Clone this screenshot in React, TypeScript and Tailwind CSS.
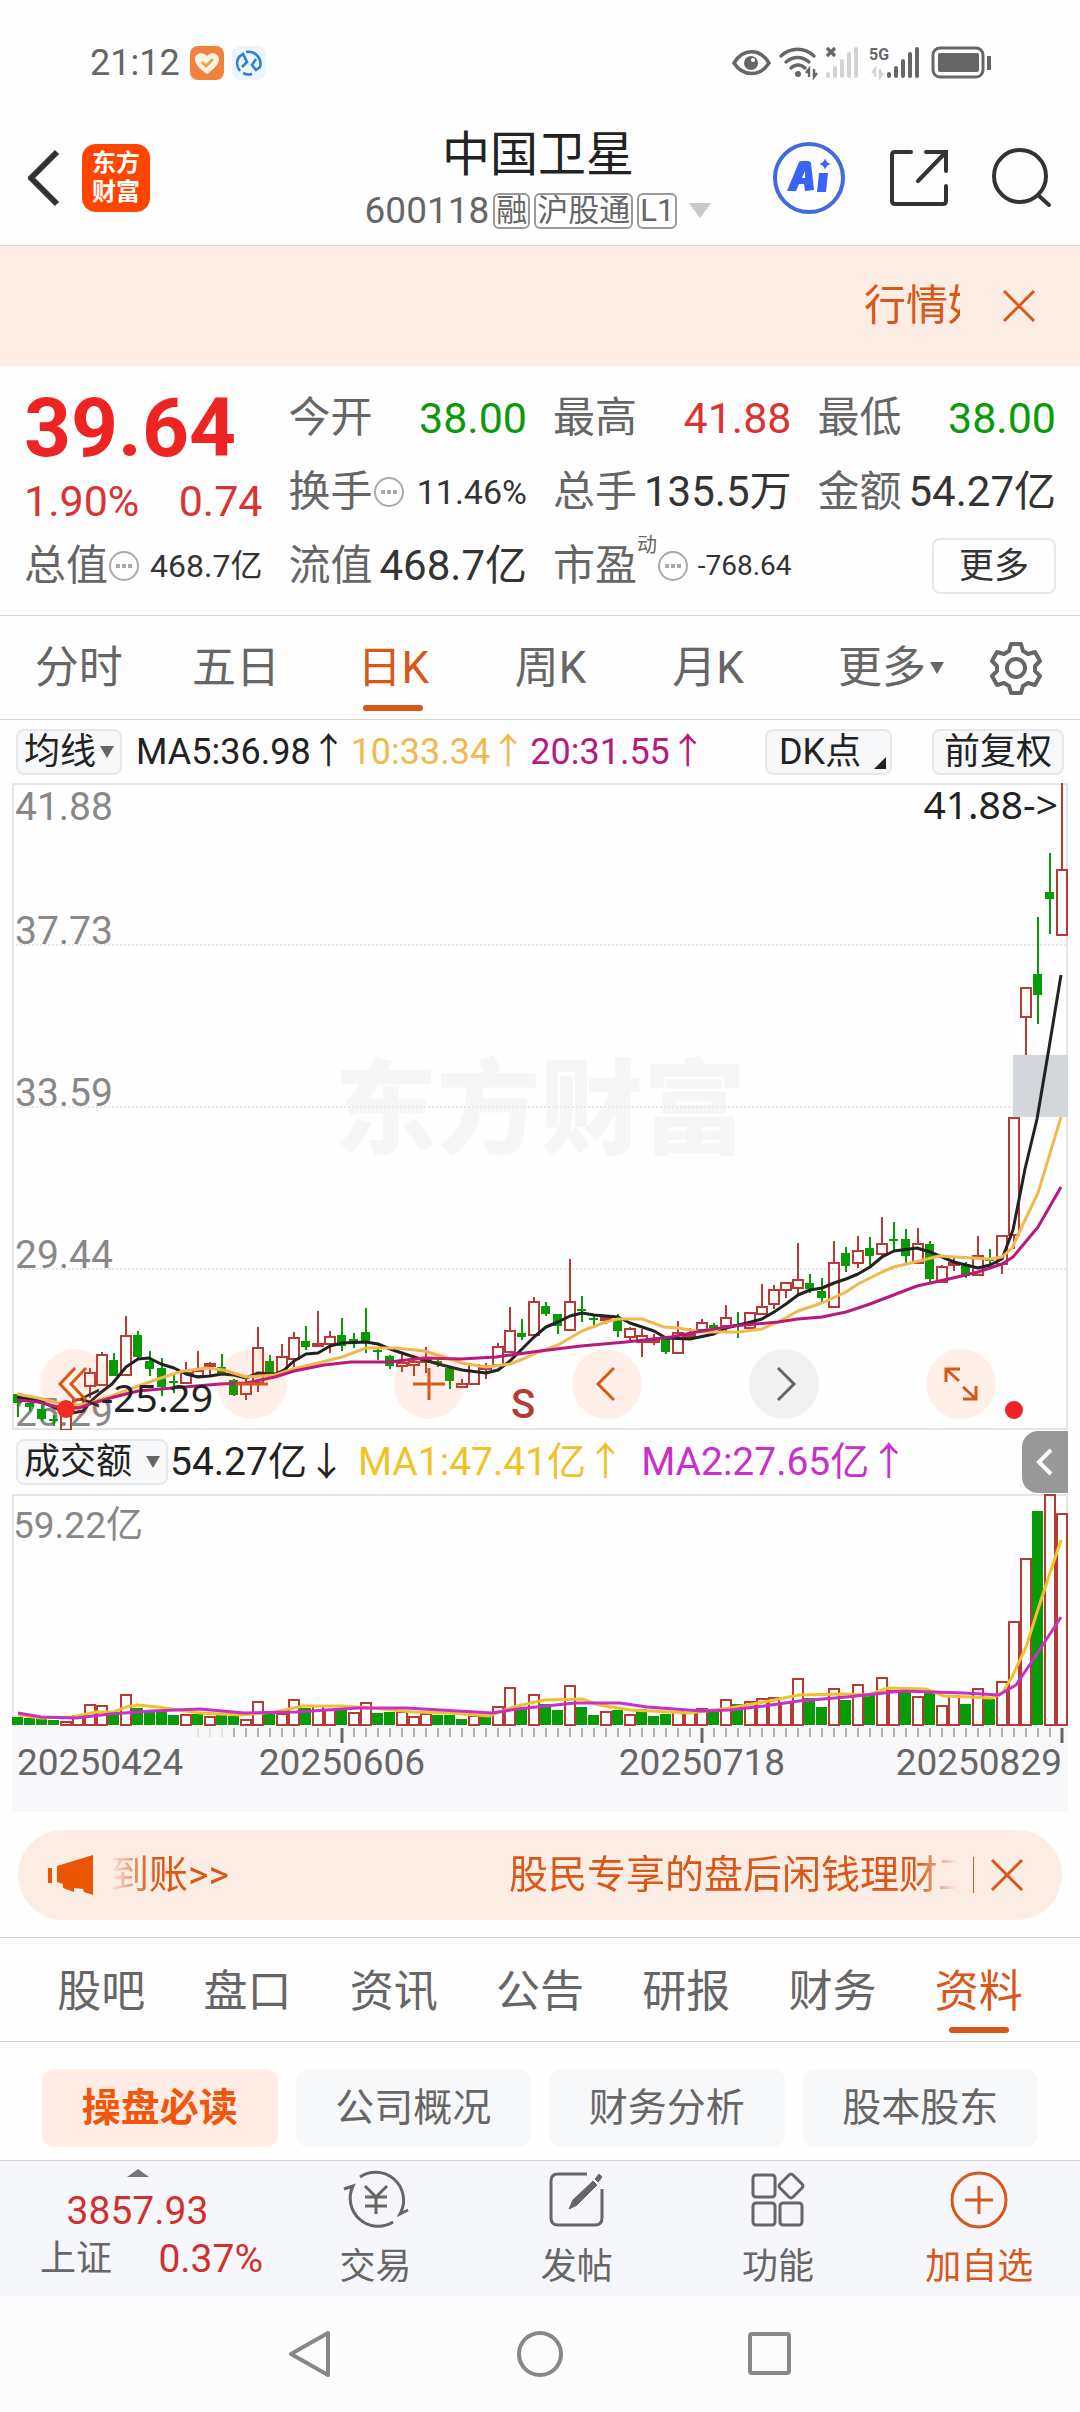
import { ReactNode } from "react";
import clsx from "clsx";

const UP = "#b83a35";
const DOWN = "#079b07";

// [direction, high, body top, body bottom, low], y offsets inside the price chart
type Candle = ["u" | "d", number, number, number, number];

const candles: Candle[] = [
  ["d", 610, 611, 620, 634], ["d", 620, 620, 624, 628], ["d", 622, 626, 636, 638], ["d", 632, 636, 638, 643],
  ["u", 622, 625, 647, 647], ["u", 615, 617, 624, 626], ["u", 585, 590, 603, 615], ["u", 569, 572, 602, 603],
  ["d", 570, 577, 593, 593], ["u", 533, 553, 592, 592], ["d", 548, 552, 574, 575], ["d", 568, 578, 586, 593],
  ["d", 575, 585, 604, 613], ["d", 590, 598, 599, 610], ["u", 579, 590, 600, 600], ["u", 568, 588, 593, 593],
  ["u", 579, 581, 583, 593], ["d", 571, 584, 590, 592], ["d", 596, 597, 612, 613], ["u", 595, 601, 611, 617],
  ["u", 544, 565, 600, 609], ["d", 572, 578, 591, 591], ["u", 561, 574, 589, 589], ["u", 549, 555, 576, 584],
  ["d", 543, 558, 564, 567], ["u", 528, 561, 562, 563], ["u", 548, 554, 561, 570], ["d", 535, 552, 563, 568],
  ["d", 550, 556, 559, 565], ["d", 525, 549, 559, 570], ["d", 565, 567, 569, 577], ["d", 572, 573, 583, 586],
  ["u", 571, 580, 583, 589], ["u", 572, 579, 582, 593], ["u", 564, 577, 578, 590], ["d", 576, 578, 581, 584],
  ["d", 584, 585, 598, 606], ["u", 596, 601, 604, 605], ["u", 581, 582, 601, 602], ["u", 580, 584, 586, 596],
  ["u", 560, 564, 582, 582], ["u", 524, 548, 569, 569], ["d", 536, 550, 554, 557], ["u", 514, 519, 552, 552],
  ["d", 519, 523, 531, 533], ["d", 531, 531, 543, 551], ["u", 476, 519, 547, 547], ["d", 513, 526, 528, 539],
  ["d", 533, 535, 536, 542], ["u", 533, 535, 537, 541], ["d", 531, 537, 548, 554], ["u", 544, 546, 554, 557],
  ["u", 546, 553, 559, 574], ["u", 551, 557, 558, 562], ["d", 555, 556, 569, 571], ["u", 538, 550, 570, 570],
  ["u", 545, 552, 553, 554], ["u", 536, 540, 547, 550], ["d", 540, 542, 545, 547], ["u", 522, 535, 543, 548],
  ["d", 529, 541, 543, 555], ["u", 530, 530, 545, 547], ["u", 501, 524, 531, 531], ["u", 502, 507, 521, 526],
  ["u", 500, 500, 507, 515], ["u", 460, 497, 505, 511], ["d", 491, 500, 506, 510], ["d", 495, 508, 515, 520],
  ["u", 458, 480, 524, 524], ["d", 464, 470, 483, 489], ["u", 453, 468, 480, 485], ["d", 454, 465, 473, 483],
  ["u", 434, 461, 471, 473], ["d", 439, 456, 457, 469], ["d", 446, 456, 473, 480], ["u", 445, 461, 480, 480],
  ["d", 458, 461, 496, 499], ["u", 482, 484, 499, 500], ["u", 474, 480, 481, 488], ["d", 479, 481, 493, 495],
  ["u", 453, 473, 492, 493], ["d", 466, 476, 477, 482], ["u", 453, 453, 481, 491], ["u", 334, 335, 452, 466],
  ["u", 204, 205, 234, 272], ["d", 134, 191, 212, 241], ["d", 70, 109, 116, 151], ["u", 0, 87, 152, 152],
];

const ma5 =
  "5,614 26,617 43,625 60,630 71,628 78,619 88,610 100,601 114,584 126,576 137,575 149,581 162,585 174,591 186,594 198,593 210,591 222,592 234,595 246,590 263,591 272,587 282,578 294,571 306,570 318,563 330,560 354,559 366,561 378,566 402,574 426,581 450,587 474,590 486,587 498,578 510,566 522,554 534,544 546,539 558,533 570,530 582,532 606,534 618,540 642,548 654,555 678,556 702,551 714,545 735,540 750,536 762,529 774,521 786,512 798,507 810,505 822,500 834,496 846,491 858,484 870,474 882,468 905,465 918,469 942,479 966,485 978,482 990,476 1001,447 1013,386 1025,336 1037,265 1049,192";
const ma10 =
  "5,611 26,615 47,620 67,622 79,620 102,612 126,603 149,595 171,588 195,585 212,587 234,594 263,592 281,586 306,580 330,574 354,565 384,565 412,568 432,574 450,580 474,584 498,581 511,576 527,569 546,562 570,548 594,539 606,536 630,536 652,544 666,545 690,549 726,549 750,546 766,539 786,528 810,520 834,509 846,501 870,489 882,484 907,478 927,473 978,476 990,474 1000,465 1013,437 1026,410 1049,334";
const ma20 =
  "5,617 26,619 50,625 67,625 78,621 102,614 126,608 160,605 208,601 234,600 263,594 282,588 312,582 339,579 377,579 412,575 449,576 484,574 528,568 569,563 614,559 659,554 690,548 721,543 766,539 786,536 810,534 834,529 858,521 905,503 941,495 966,489 990,481 1001,474 1026,444 1049,404";

const volumes = [
  8, 7, 6, 5, 4, 10, 21, 20, 12, 31, 17, 15, 14, 10, 11, 11, 9, 10, 9, 6, 24, 12, 12, 26, 17, 20, 16, 15, 13, 23, 12,
  13, 14, 9, 12, 10, 10, 6, 10, 9, 19, 38, 16, 31, 21, 15, 40, 18, 10, 14, 15, 11, 16, 9, 11, 14, 13, 17, 15, 26, 21,
  24, 27, 28, 23, 47, 27, 18, 37, 25, 41, 30, 48, 35, 33, 29, 32, 20, 30, 21, 37, 26, 44, 104, 167, 214, 231, 212,
];

// days whose turnover bar is green
const greenVolume = new Set([
  0, 1, 2, 3, 8, 10, 11, 12, 13, 15, 17, 18, 21, 24, 27, 30, 31, 35, 36, 37, 39, 42, 44, 45, 47, 48, 50, 52, 53, 54,
  58, 60, 66, 67, 69, 71, 74, 76, 79, 81, 85,
]);

const volMa1 =
  "6,221 29,224 60,223 84,218 102,218 114,213 126,211 146,213 188,219 229,221 263,218 291,212 329,212 360,214 401,218 436,219 477,222 501,213 532,206 570,205 587,211 618,216 677,219 718,214 752,208 787,201 832,200 856,201 876,194 914,195 932,202 980,204 991,198 1000,183 1014,153 1028,109 1049,46";
const volMa2 =
  "6,219 29,223 64,224 98,220 140,217 188,215 232,219 284,218 346,214 394,214 463,218 480,219 505,215 563,209 608,209 635,213 690,217 718,216 752,212 787,207 835,203 890,197 952,199 987,201 1004,191 1021,166 1049,123";

function StatusBar() {
  return (
    <div className="flex h-[126px] items-center justify-between pl-[90px] pr-[88px] text-[#666]">
      <div className="flex items-center gap-2">
        <span className="text-[36px] leading-none">21:12</span>
        <svg className="ml-0.5" width="34" height="34" viewBox="0 0 34 34">
          <rect width="34" height="34" rx="8" fill="#f0813f" />
          <path d="M17 28C10 23 5 18 5 13c0-6 8-8 12-3 4-5 12-3 12 3 0 5-5 10-12 15z" fill="#fff3e2" />
          <path d="M12 16l4 4 7-7" fill="none" stroke="#f0a050" strokeWidth="3" />
        </svg>
        <svg width="34" height="34" viewBox="0 0 34 34" fill="none" stroke="#2f7fd0" strokeWidth="2.6">
          <rect width="34" height="34" rx="8" fill="#edf4fb" stroke="none" />
          <path d="M8 25A12 12 0 0 1 7 11l4-3 4 8-5 5M14 6a12 12 0 0 1 14 15l-4 3-4-5 4-6M11 27a12 12 0 0 0 9 1" />
        </svg>
      </div>
      <svg width="260" height="34" viewBox="0 0 260 34" fill="none" stroke="#666">
        <path d="M2 17C11 2 28 2 37 17 28 31 11 31 2 17z" strokeWidth="3.6" />
        <circle cx="19" cy="17" r="7" fill="#666" stroke="none" />
        <circle cx="21" cy="14" r="2" fill="#fff" stroke="none" />
        <path d="M49 10c10-9 23-9 33 0M54 16c7-6 16-6 23 0M59 22c4-4 10-4 14 0" strokeWidth="3.4" strokeLinecap="round" />
        <circle cx="66" cy="28" r="3" fill="#666" stroke="none" />
        <path d="M77 31v-8l-3 4M82 23v8l3-4" strokeWidth="2.4" />
        <path d="M95 2l8 8M103 2l-8 8" strokeWidth="3.2" />
        <path d="M96 28v2M103 22v8M110 15v15M117 8v22M124 3v27" stroke="#d2d2d2" strokeWidth="4" strokeLinecap="round" />
        <text x="137" y="14" fill="#666" stroke="none" fontSize="16" fontWeight="700">5G</text>
        <path d="M143 31v-8l-3 4M148 23v8l3-4" stroke="#d2d2d2" strokeWidth="2.4" />
        <path d="M157 28v2M164 22v8M171 15v15M178 8v22M185 3v27" strokeWidth="4" strokeLinecap="round" />
        <rect x="201" y="2" width="50" height="29" rx="7" strokeWidth="3" />
        <rect x="206" y="7" width="41" height="19" rx="2" fill="#666" stroke="none" />
        <path d="M257 10v14" strokeWidth="4" />
      </svg>
    </div>
  );
}

function Badge({ children }: { children: ReactNode }) {
  return (
    <span className="flex h-9 items-center rounded-md border-2 border-[#999] px-px text-[31px] leading-none">
      {children}
    </span>
  );
}

function Header() {
  return (
    <header className="grid h-[120px] grid-cols-[1fr_auto_1fr] items-center border-b border-[#d4d4d4] pr-7 pl-6">
      <div className="flex items-center gap-[22px] pb-4">
        <button aria-label="返回">
          <svg width="36" height="60" viewBox="0 0 36 60" fill="none" stroke="#333" strokeWidth="6" strokeLinejoin="round">
            <path d="M33 4L7 30l26 26" />
          </svg>
        </button>
        <a
          href="#home"
          className="flex h-[68px] w-[68px] flex-col items-center justify-center rounded-[14px] bg-[#ff4500] text-[24px] leading-[29px] font-bold text-white"
        >
          <span>东方</span>
          <span>财富</span>
        </a>
      </div>
      <div className="flex flex-col items-center gap-3 pb-3">
        <h1 className="text-[48px] leading-[50px] text-[#222]">中国卫星</h1>
        <div className="flex items-center gap-1 text-[#666]">
          <span className="text-[37px] leading-none">600118</span>
          <Badge>融</Badge>
          <Badge>沪股通</Badge>
          <Badge>L1</Badge>
          <svg className="ml-2" width="22" height="15" viewBox="0 0 22 15">
            <path d="M0 0h22L11 15z" fill="#c8c8c8" />
          </svg>
        </div>
      </div>
      <div className="flex items-center justify-end gap-[43px] pb-4">
        <button aria-label="AI">
          <svg width="74" height="74" viewBox="0 0 74 74">
            <circle cx="37" cy="37" r="34" fill="none" stroke="#4169e1" strokeWidth="4" />
            <path d="M15 50l12-29q1-1 3-1h6q2 0 3 2l3 27-9 1-1-7h-5l-3 7zM30 37h3v-7zM47 32h9l-2 19h-9z" fill="#3a63f8" />
            <path d="M53 17q1 5 6 6-5 1-6 6-1-5-6-6 5-1 6-6z" fill="#3a63f8" />
          </svg>
        </button>
        <button aria-label="分享">
          <svg width="60" height="60" viewBox="0 0 60 60" fill="none" stroke="#333" strokeWidth="4" strokeLinecap="round">
            <path d="M22 4H6q-3 0-3 3v46q0 3 3 3h48q3 0 3-3V38M37 4h20v19M56 5L29 33" />
          </svg>
        </button>
        <button aria-label="搜索">
          <svg width="60" height="60" viewBox="0 0 60 60" fill="none" stroke="#333" strokeWidth="4" strokeLinecap="round">
            <circle cx="28" cy="28" r="26" />
            <path d="M46 47l11 10" />
          </svg>
        </button>
      </div>
    </header>
  );
}

function CloseIcon() {
  return (
    <svg width="34" height="34" viewBox="0 0 34 34" fill="none" stroke="#d8571a" strokeWidth="3">
      <path d="M2 2l30 30M32 2L2 32" />
    </svg>
  );
}

function InfoDot() {
  return (
    <svg width="32" height="32" viewBox="0 0 32 32" className="shrink-0">
      <circle cx="16" cy="16" r="14" fill="none" stroke="#aaa" strokeWidth="2" />
      <path d="M8 14h4v4H8zM14 14h4v4h-4zM20 14h4v4h-4z" fill="#aaa" />
    </svg>
  );
}

type CellProps = { label: string; value: string; info?: boolean; sup?: string; className?: string };

function Cell({ label, value, info, sup, className = "text-[42px] text-[#333]" }: CellProps) {
  return (
    <div className="flex h-[74px] items-center justify-between whitespace-nowrap leading-none">
      <span className="flex items-center text-[42px] text-[#666]">
        {label}
        {sup && <sup className="self-start text-[20px] leading-none">{sup}</sup>}
        {info && <InfoDot />}
      </span>
      <span className={className}>{value}</span>
    </div>
  );
}

function Quote() {
  return (
    <section className="grid grid-cols-4 gap-x-[26px] border-b border-[#d4d4d4] px-6 pt-[15px] pb-3">
      <div className="row-span-2 whitespace-nowrap">
        <div className="flex h-[93px] items-center text-[82px] leading-none font-bold text-[#ee2424]">39.64</div>
        <div className="flex h-[55px] items-center justify-between text-[43px] leading-none text-[#d93333]">
          <span>1.90%</span>
          <span>0.74</span>
        </div>
      </div>
      <Cell label="今开" value="38.00" className="text-[43px] text-[#0b9a0b]" />
      <Cell label="最高" value="41.88" className="text-[43px] text-[#d93333]" />
      <Cell label="最低" value="38.00" className="text-[43px] text-[#0b9a0b]" />
      <Cell label="换手" value="11.46%" info className="text-[34px] text-[#333]" />
      <Cell label="总手" value="135.5万" />
      <Cell label="金额" value="54.27亿" />
      <Cell label="总值" value="468.7亿" info className="text-[32px] text-[#333]" />
      <Cell label="流值" value="468.7亿" />
      <Cell label="市盈" value="-768.64" info sup="动" className="text-[28px] text-[#333]" />
      <div className="flex h-[74px] items-center justify-end">
        <button className="h-14 w-[124px] rounded-lg border-2 border-[#e8e8e8] text-[35px] leading-none text-[#333]">
          更多
        </button>
      </div>
    </section>
  );
}

function TabBar({ tabs, active, children, className }: { tabs: string[]; active: string; children?: ReactNode; className?: string }) {
  return (
    <nav className={clsx("flex items-center border-b border-[#d4d4d4]", className)}>
      {tabs.map((t) => (
        <button
          key={t}
          className={clsx(
            "relative flex h-full flex-1 items-center justify-center text-[44px] leading-none",
            t === active ? "text-[#d8571a]" : "text-[#666]",
          )}
        >
          {t}
          {t === active && <span className="absolute bottom-2 h-[6px] w-[60px] rounded-full bg-[#d8571a]" />}
        </button>
      ))}
      {children}
    </nav>
  );
}

function Caret({ className }: { className?: string }) {
  return (
    <svg className={className} width="14" height="12" viewBox="0 0 14 12">
      <path d="M0 0h14L7 12z" fill="#666" />
    </svg>
  );
}

const pill = "flex h-[46px] items-center rounded-lg border-2 border-[#e6e8ec] bg-[#f7f8fa] text-[36px] leading-none text-[#222]";

function Polyline({ points, color }: { points: string; color: string }) {
  return <polyline points={points} fill="none" stroke={color} strokeWidth="3" strokeLinejoin="round" />;
}

function ToolButton({ label, path, gray }: { label: string; path: string; gray?: boolean }) {
  return (
    <button
      aria-label={label}
      className={clsx(
        "flex h-[70px] w-[70px] items-center justify-center rounded-full",
        gray ? "bg-black/5" : "bg-[#ff6a2a]/10",
      )}
    >
      <svg width="40" height="40" viewBox="0 0 40 40" fill="none" stroke={gray ? "#666" : "#d8571a"} strokeWidth="3">
        <path d={path} />
      </svg>
    </button>
  );
}

function PriceChart() {
  return (
    <div className="relative mx-3">
      <svg viewBox="0 0 1056 647" className="block w-full">
        <text x="528" y="363" textAnchor="middle" fontSize="103" fontWeight="900" fill="#f6f6f6">东方财富</text>
        <rect x="1" y="1" width="1054" height="645" fill="none" stroke="#e5e5e5" strokeWidth="2" />
        {[162, 324, 486].map((y) => (
          <line key={y} x1="0" x2="1056" y1={y} y2={y} stroke="#e8e8e8" strokeWidth="2" strokeDasharray="2 2" />
        ))}
        <rect x="1001" y="272" width="55" height="62" fill="#d3d6db" />
        <g fontSize="39" fill="#888">
          <text x="3" y="37">41.88</text>
          <text x="3" y="161">37.73</text>
          <text x="3" y="323">33.59</text>
          <text x="3" y="485">29.44</text>
          <text x="3" y="643">25.29</text>
        </g>
        {candles.map(([dir, high, top, bottom, low], i) => {
          const x = 6 + i * 12;
          const h = Math.max(bottom - top, 2);
          if (dir === "d") {
            return (
              <g key={i} fill={DOWN}>
                <rect x={x - 1} y={high} width="2" height={low - high} />
                <rect x={x - 5} y={top} width="9" height={h} />
              </g>
            );
          }
          return (
            <g key={i} stroke={UP} strokeWidth="2" fill="none">
              <path d={`M${x} ${high}V${top}M${x} ${bottom}V${low}`} />
              <rect x={x - 5} y={top} width="10" height={h} />
            </g>
          );
        })}
        <Polyline points={ma5} color="#222" />
        <Polyline points={ma10} color="#f0b950" />
        <Polyline points={ma20} color="#b8197c" />
        <g fontSize="39" fill="#222" textAnchor="end" className="font-['Noto_Sans']">
          <text x="201" y="629">&lt;-25.29</text>
          <text x="1046" y="36">41.88-&gt;</text>
        </g>
        <text x="499" y="635" fontSize="40" fontWeight="500" fill={UP}>S</text>
        <circle cx="54" cy="626" r="9" fill="#ee2424" />
        <circle cx="1002" cy="627" r="9" fill="#ee2424" />
      </svg>
      <div className="absolute right-[72px] bottom-[11px] left-7 flex justify-between">
        <ToolButton label="最左" path="M20 4L5 20l15 16M31 4L16 20l15 16" />
        <ToolButton label="缩小" path="M4 20h32" />
        <ToolButton label="放大" path="M4 20h32M20 4v32" />
        <ToolButton label="向左" path="M27 4L11 20l16 16" />
        <ToolButton label="向右" path="M14 4l16 16-16 16" gray />
        <ToolButton label="全屏" path="M5 18V5h14M6 6l12 11M35 22v13H22M34 34L22 23" />
      </div>
    </div>
  );
}

function VolumeChart() {
  return (
    <div className="mx-3">
      <svg viewBox="0 0 1056 232" className="block w-full">
        <path d="M1 232V1h1054v231" fill="none" stroke="#e5e5e5" strokeWidth="2" />
        <text x="1" y="44" fontSize="37" fill="#888">59.22亿</text>
        {volumes.map((v, i) =>
          greenVolume.has(i) ? (
            <rect key={i} x={i * 12} y={231 - v} width="11" height={v} fill={DOWN} />
          ) : (
            <rect key={i} x={i * 12 + 1} y={232 - v} width="10" height={v - 1} fill="#fff" stroke={UP} strokeWidth="2" />
          ),
        )}
        <Polyline points={volMa1} color="#eec32a" />
        <Polyline points={volMa2} color="#c92fc9" />
      </svg>
      <svg viewBox="0 0 1056 86" className="block w-full bg-[#f8f8fa]">
        {Array.from({ length: 73 }, (_, n) => {
          const i = n + 15;
          const major = i === 27 || i === 57 || i === 87;
          return (
            <line
              key={i}
              x1={6 + i * 12}
              x2={6 + i * 12}
              y1="2"
              y2={major ? 17 : 11}
              stroke={i < 18 ? "#ccc" : "#666"}
              strokeWidth={major ? 3 : 1}
            />
          );
        })}
        <g fontSize="37" fill="#666">
          <text x="5" y="49">20250424</text>
          <text x="330" y="49" textAnchor="middle">20250606</text>
          <text x="690" y="49" textAnchor="middle">20250718</text>
          <text x="1050" y="49" textAnchor="end">20250829</text>
        </g>
      </svg>
    </div>
  );
}

function Notice() {
  return (
    <div className="mx-[18px] mt-[18px] mb-[17px] flex h-[90px] items-center rounded-full bg-[#fcede4] pr-[38px] pl-[30px] text-[#d8571a]">
      <svg width="46" height="40" viewBox="0 0 46 40" fill="#ea5504" className="shrink-0">
        <path d="M0 13h4v15H0zM9 11L45 0v40l-9-3-1-3-9-1v4l-11-4v-4l-6-2z" />
      </svg>
      <div className="ml-4 flex min-w-0 flex-1 justify-between overflow-hidden text-[39px] leading-[54px] whitespace-nowrap [mask-image:linear-gradient(to_right,transparent,black_40px,black_calc(100%-40px),transparent)]">
        <span>到账&gt;&gt;</span>
        <span className="-mr-5">股民专享的盘后闲钱理财工</span>
      </div>
      <span className="mr-4 ml-4 h-9 w-px bg-[#d8571a]" />
      <button aria-label="关闭公告">
        <CloseIcon />
      </button>
    </div>
  );
}

function ActionItem({ label, color = "text-[#666]", children }: { label: string; color?: string; children: ReactNode }) {
  return (
    <button className={clsx("flex flex-1 flex-col items-center gap-3 pt-2 text-[36px] leading-[48px]", color)}>
      <svg width="66" height="62" viewBox="0 0 66 62" fill="none" stroke="currentColor" strokeWidth="3">
        {children}
      </svg>
      {label}
    </button>
  );
}

function BottomBar() {
  return (
    <footer className="flex h-[136px] border-t border-[#d4d4d4] bg-[#f6f7fa]">
      <button className="flex w-[275px] flex-col items-center pt-2 leading-none text-[#d03030]">
        <svg width="22" height="8" viewBox="0 0 22 8">
          <path d="M0 8L11 0l11 8z" fill="#777" />
        </svg>
        <span className="mt-3 text-[39px] leading-[44px]">3857.93</span>
        <span className="flex w-full justify-between pr-3 pl-10 leading-[52px]">
          <span className="text-[36px] text-[#666]">上证</span>
          <span className="text-[39px]">0.37%</span>
        </span>
      </button>
      <ActionItem label="交易">
        <path d="M17 8A28 28 0 0 1 58 43l-1 2 8-4M50 53A28 28 0 0 1 10 17l-9 3" />
        <path d="M22 17l11 11 11-11M22 28h22M22 37h22M33 28v17" />
      </ActionItem>
      <ActionItem label="发帖">
        <path d="M43 5H14q-7 0-7 7v37q0 7 7 7h37q7 0 7-7V20" />
        <path d="M25 40l4-9 20-19 4 4-20 20zM51 10l4-5 3 3-4 5z" fill="currentColor" strokeWidth="1" />
      </ActionItem>
      <ActionItem label="功能">
        <rect x="8" y="6" width="22" height="22" rx="3" />
        <rect x="8" y="34" width="22" height="22" rx="3" />
        <rect x="35" y="34" width="22" height="22" rx="3" />
        <path d="M44 6q2-2 4 0l9 9q2 2 0 4l-9 9q-2 2-4 0l-9-9q-2-2 0-4z" />
      </ActionItem>
      <ActionItem label="加自选" color="text-[#d8571a]">
        <circle cx="33" cy="31" r="27" />
        <path d="M19 31h28M33 17v28" />
      </ActionItem>
    </footer>
  );
}

export default function App() {
  return (
    <div className="w-full bg-[#fefefe] font-['Roboto','Noto_Sans_CJK_SC',sans-serif]">
      <StatusBar />
      <Header />

      {/* Scrolling tip, the text is cut off at the right edge */}
      <div className="flex h-[120px] items-center justify-end bg-[#fcede4] pr-11 text-[#d8571a]">
        <div className="w-24 overflow-hidden text-[42px] leading-[60px] whitespace-nowrap">行情好</div>
        <button aria-label="关闭" className="ml-[42px]">
          <CloseIcon />
        </button>
      </div>

      <Quote />

      <TabBar tabs={["分时", "五日", "日K", "周K", "月K"]} active="日K" className="h-[104px] pr-1">
        <button className="flex flex-1 items-center justify-end gap-1 pr-3 text-[44px] leading-none text-[#666]">
          更多
          <Caret />
        </button>
        <button aria-label="设置" className="flex w-[120px] justify-center">
          <svg width="54" height="54" viewBox="0 0 54 54" fill="none" stroke="#666" strokeWidth="4" strokeLinejoin="round">
            <path d="M22 3h10l2 7 5 3 7-2 5 9-5 5v5l5 5-5 9-7-2-5 3-2 7H22l-2-7-5-3-7 2-5-9 5-5v-5l-5-5 5-9 7 2 5-3z" />
            <circle cx="27" cy="27" r="9" />
          </svg>
        </button>
      </TabBar>

      {/* Moving averages */}
      <div className="flex h-[63px] items-center px-4 text-[36px] leading-none whitespace-nowrap">
        <button className={clsx(pill, "mr-[14px] px-1.5")}>
          均线
          <Caret className="ml-1" />
        </button>
        <span className="text-[#222]">MA5:36.98↑</span>
        <span className="ml-1 text-[#f0b950]">10:33.34↑</span>
        <span className="ml-1 text-[#b8197c]">20:31.55↑</span>
        <button className={clsx(pill, "ml-auto w-[127px] justify-between pr-1 pl-3")}>
          DK点
          <svg className="self-end pb-1" width="12" height="16" viewBox="0 0 12 12">
            <path d="M12 0v12H0z" fill="#222" />
          </svg>
        </button>
        <button className={clsx(pill, "ml-10 px-[10px]")}>前复权</button>
      </div>

      <PriceChart />

      {/* Turnover */}
      <div className="flex h-16 items-center pr-3 pl-4 text-[39px] leading-none whitespace-nowrap">
        <button className={clsx(pill, "mr-0.5 w-[152px] justify-between px-1.5")}>
          成交额
          <Caret />
        </button>
        <span className="text-[#222]">54.27亿↓</span>
        <span className="ml-3 text-[#eec32a]">MA1:47.41亿↑</span>
        <span className="ml-4 text-[#c92fc9]">MA2:27.65亿↑</span>
        <button aria-label="展开" className="ml-auto flex h-[62px] w-[46px] items-center justify-center rounded-l-2xl bg-[#999]">
          <svg width="18" height="28" viewBox="0 0 18 28" fill="none" stroke="#fff" strokeWidth="4">
            <path d="M15 2L3 14l12 12" />
          </svg>
        </button>
      </div>

      <VolumeChart />
      <Notice />

      <TabBar
        tabs={["股吧", "盘口", "资讯", "公告", "研报", "财务", "资料"]}
        active="资料"
        className="h-[105px] border-t px-7 pt-1"
      />

      <div className="grid grid-cols-4 gap-[18px] px-[42px] pt-[27px] pb-[13px] text-[39px] leading-none text-[#666]">
        <button className="h-[78px] rounded-xl bg-[#ffece4] font-bold text-[#f2560c]">操盘必读</button>
        <button className="h-[78px] rounded-xl bg-[#f7f8fa]">公司概况</button>
        <button className="h-[78px] rounded-xl bg-[#f7f8fa]">财务分析</button>
        <button className="h-[78px] rounded-xl bg-[#f7f8fa]">股本股东</button>
      </div>

      <BottomBar />

      {/* System navigation */}
      <div className="grid h-[116px] grid-cols-3 place-items-center bg-[#fcfcfc] px-[18%]">
        <button aria-label="Back">
          <svg width="48" height="48" viewBox="0 0 48 48" fill="none" stroke="#888" strokeWidth="4" strokeLinejoin="round">
            <path d="M42 3v42L5 24z" />
          </svg>
        </button>
        <button aria-label="Home">
          <svg width="48" height="48" viewBox="0 0 48 48" fill="none" stroke="#888" strokeWidth="4">
            <circle cx="24" cy="24" r="21" />
          </svg>
        </button>
        <button aria-label="Recents">
          <svg width="48" height="48" viewBox="0 0 48 48" fill="none" stroke="#888" strokeWidth="4">
            <rect x="4" y="4" width="39" height="39" rx="2" />
          </svg>
        </button>
      </div>
    </div>
  );
}
